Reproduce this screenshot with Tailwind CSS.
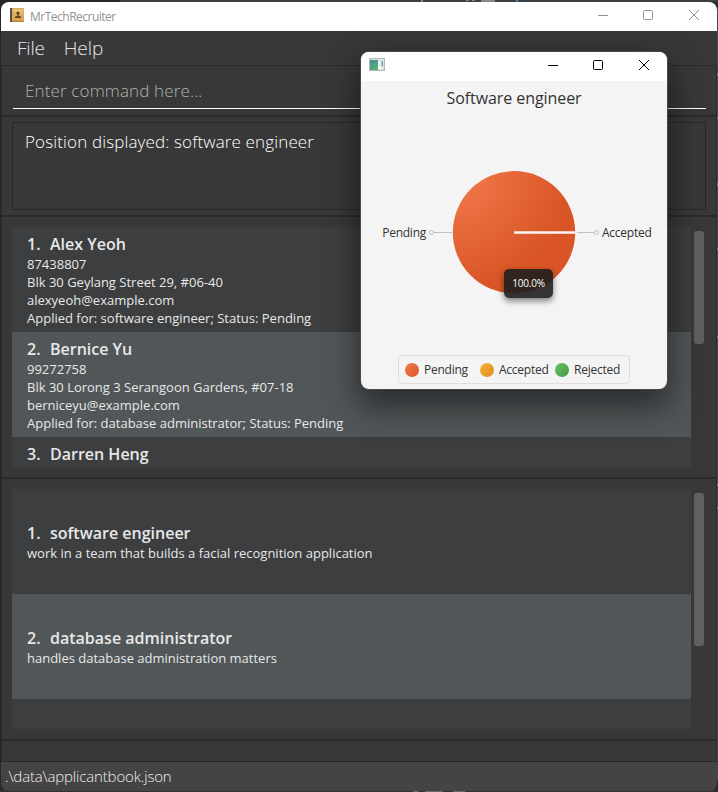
<!DOCTYPE html>
<html lang="en">
<head>
<meta charset="utf-8">
<title>MrTechRecruiter</title>
<script src="https://cdn.jsdelivr.net/npm/@tailwindcss/browser@4"></script>
</head>
<body class="relative h-[792px] w-[718px] overflow-hidden bg-[#25272b] font-['Open_Sans',sans-serif]">
<!-- Desktop details visible beyond the window's edge -->
<svg class="absolute inset-0" width="718" height="792" viewBox="0 0 718 792">
  <path d="M120 0H718V2H120z" fill="#3c3e40"/><path d="M421 0h2v2h-2zM466 0h3v1h-3zM472 0h3v1h-3zM481 0h14v2h-14z" fill="#85878a"/><path d="M516 0h2v2h-2z" fill="#4d86b4"/>
  <path d="M717 8V780" stroke="#4a4a4a" stroke-width="2"/>
  <path d="M717.500 73v3M717.500 117v2M717.500 183v3M717.500 248v2M717.500 336v2M717.500 484v2M717.500 507v2" stroke="#8b7767" stroke-width="1"/>
  <path d="M0 791H718" stroke="#333" stroke-width="2"/><path d="M413 791.500h5M425 791.500h18M453 791.500h12" stroke="#6b6b6b"/>
</svg>

<div class="relative ml-px mt-[2px] flex h-[789px] w-[716px] flex-col overflow-hidden rounded-[8px] bg-[#383838]">
  <header class="flex h-[29px] shrink-0 items-center bg-white pl-[9px]">
    <svg class="-mt-[3px]" width="14" height="14" viewBox="0 0 14 14"><defs><linearGradient id="book" x1="0" y1="0" x2="0" y2="1"><stop stop-color="#ecc47c"/><stop offset="1" stop-color="#d79a42"/></linearGradient></defs><rect width="14" height="14" rx="1" fill="#d5a860"/><rect x="3" y="1" width="10" height="12" fill="url(#book)"/><rect width="2" height="14" fill="#5d5040"/><path d="M2 13h12v1H2z" fill="#b5803a"/><circle cx="8" cy="5" r="1.600" fill="#5a4325"/><path d="M7.300 6h1.400v2l2.300.5V10H5V8.500l2.300-.5z" fill="#5a4325"/></svg>
    <span class="ml-[6px] text-[12px] leading-4 tracking-[-0.5px] text-[#929292]">MrTechRecruiter</span>
    <svg class="ml-auto mr-[16px] -mt-[3px]" width="103" height="12" viewBox="0 0 103 12" fill="none" stroke="#929292"><path d="M0 6.500H10"/><rect x="45.500" y="1.500" width="9" height="9" rx="1"/><path d="M91 1l10 10M101 1L91 11"/></svg>
  </header>

  <nav class="flex h-[34px] shrink-0 items-center gap-[19px] pl-[16px] text-[19px] font-light leading-6 text-[#e5e5e5]">
    <span class="tracking-[-0.2px]">File</span><span class="tracking-[-0.1px]">Help</span>
  </nav>

  <main class="flex h-[697px] shrink-0 flex-col border border-[#2a2a2a]">
    <section class="h-[49px] shrink-0 px-[10px] pt-[10px]">
      <div class="ml-px h-[33px] border-b border-white pl-[12px] pt-[3px] text-[17px] font-light leading-6 tracking-[0.14px] text-[#b2b2b2]">Enter command here...</div>
    </section>
    <section class="h-[102px] shrink-0 border-y-2 border-[#2a2a2a] px-[10px] pt-[5px]">
      <div class="h-[88px] border border-[#282828] pl-[12px] pt-[7px] text-[17px] font-light leading-6 tracking-[0.14px] text-white">Position displayed: software engineer</div>
    </section>

    <section class="flex h-[262px] shrink-0 border-b-2 border-[#2a2a2a] pl-[10px] pt-[10px]">
      <div class="h-[240px] w-[679px] overflow-hidden bg-[#3c3e3f] text-[13px] leading-[18px] text-[#e8e8e8]">
        <article class="h-[105px] pl-[15px] pt-[6px]">
          <h2 class="flex h-[22px] text-[16px] font-semibold leading-[22px]"><span class="w-[23px]">1.</span><span>Alex Yeoh</span></h2>
          <p>87438807</p><p>Blk 30 Geylang Street 29, #06-40</p><p>alexyeoh@example.com</p><p>Applied for: software engineer; Status: Pending</p>
        </article>
        <article class="h-[105px] bg-[#515658] pl-[15px] pt-[6px]">
          <h2 class="flex h-[22px] text-[16px] font-semibold leading-[22px]"><span class="w-[23px]">2.</span><span>Bernice Yu</span></h2>
          <p>99272758</p><p>Blk 30 Lorong 3 Serangoon Gardens, #07-18</p><p>berniceyu@example.com</p><p>Applied for: database administrator; Status: Pending</p>
        </article>
        <article class="h-[105px] pl-[15px] pt-[6px]">
          <h2 class="flex h-[22px] text-[16px] font-semibold leading-[22px]"><span class="w-[23px]">3.</span><span>Darren Heng</span></h2>
        </article>
      </div>
      <div class="ml-[3px] mt-[4px] h-[113px] w-[10px] rounded-[3px] bg-[#606060]"></div>
    </section>

    <section class="flex h-[262px] shrink-0 border-b-2 border-[#2a2a2a] pl-[10px] pt-[10px]">
      <div class="h-[240px] w-[679px] overflow-hidden bg-[#3c3e3f] text-[13px] leading-[18px] text-[#e8e8e8]">
        <article class="h-[105px] pl-[15px] pt-[33px]">
          <h2 class="flex h-[22px] text-[16px] font-semibold leading-[22px]"><span class="w-[23px]">1.</span><span>software engineer</span></h2>
          <p>work in a team that builds a facial recognition application</p>
        </article>
        <article class="h-[105px] bg-[#515658] pl-[15px] pt-[33px]">
          <h2 class="flex h-[22px] text-[16px] font-semibold leading-[22px]"><span class="w-[23px]">2.</span><span>database administrator</span></h2>
          <p>handles database administration matters</p>
        </article>
      </div>
      <div class="ml-[3px] mt-[4px] h-[153px] w-[10px] rounded-[3px] bg-[#606060]"></div>
    </section>
  </main>
  <footer class="flex-1 bg-[#444] pl-[4px] pt-[3px] text-[15px] font-light leading-[22px] tracking-[-0.16px] text-[#eee]">.\data\applicantbook.json</footer>
</div>

<!-- Statistics window -->
<div class="absolute left-[361px] top-[52px] flex h-[337px] w-[306px] flex-col overflow-visible rounded-[8px] bg-[#f4f4f4] text-[#333] shadow-[0_0_0_1px_#484848,0_14px_32px_3px_rgba(0,0,0,0.5)]">
  <header class="flex h-[29px] shrink-0 items-center rounded-t-[8px] bg-white pl-[8px]">
    <svg class="-mt-[4px]" width="16" height="13" viewBox="0 0 16 13"><defs><linearGradient id="app" x1="0" y1="0" x2=".6" y2="1"><stop stop-color="#4389a3"/><stop offset="1" stop-color="#58b36b"/></linearGradient></defs><rect x=".5" y=".5" width="15" height="12" fill="#dfe3e5" stroke="#b2b7bb"/><rect x="1" y="2" width="8" height="10" fill="url(#app)"/><path d="M9 3h3v4H9zM9 8h3v3H9z" fill="#f9f9f9"/><path d="M12.500 3H14v5h-1.500z" fill="#6fa4a8"/></svg>
    <svg class="ml-auto mr-[16px] -mt-[3px]" width="103" height="12" viewBox="0 0 103 12" fill="none" stroke="#000"><path d="M0 6.500H10"/><rect x="45.500" y="1.500" width="9" height="9" rx="1"/><path d="M91 1l10 10M101 1L91 11"/></svg>
  </header>
  <h1 class="mt-[6px] h-[22px] shrink-0 text-center text-[16px] leading-[22px] tracking-[-0.07px]">Software engineer</h1>
  <div class="relative flex h-[247px] shrink-0 items-center">
    <span class="w-[65px] text-right text-[12px] leading-4 tracking-[-0.25px]">Pending</span>
    <svg class="-mt-px" width="176" height="130" viewBox="426 167 176 130"><defs><radialGradient id="pie" gradientUnits="userSpaceOnUse" cx="453" cy="171" r="118"><stop stop-color="#f37c50"/><stop offset="1" stop-color="#d95525"/></radialGradient></defs><circle cx="514" cy="232.300" r="61.200" fill="url(#pie)"/><path d="M514 232.500H576" stroke="#f3d0c2" stroke-width="3"/><path d="M514 232.500H576" stroke="#f4f4f4"/><g fill="none" stroke="#c2c2c2"><path d="M433 232.500H452M577 232.500H595"/><circle cx="431.500" cy="232.500" r="2"/><circle cx="596.500" cy="232.500" r="2"/></g></svg>
    <span class="text-[12px] leading-4 tracking-[-0.25px]">Accepted</span>
    <div class="absolute left-[143px] top-[160px] h-[29px] w-[49px] rounded-[5px] bg-[#1e1e1e]/90 text-center text-[10px] leading-[29px] tracking-[-0.2px] text-white shadow-[0_3px_6px_rgba(0,0,0,0.5)]">100.0%</div>
  </div>
  <div class="ml-[37px] mt-[-1px] flex h-[29px] w-[232px] shrink-0 items-center rounded-[4px] border border-[#dedede] pl-[6px] text-[12px] leading-4 tracking-[-0.25px]">
    <div class="flex w-[75px] items-center gap-[5px]"><i class="size-[14px] shrink-0 rounded-full bg-linear-to-br from-[#f47a50] to-[#d75526]"></i><span>Pending</span></div>
    <div class="flex w-[75px] items-center gap-[5px]"><i class="size-[14px] shrink-0 rounded-full bg-linear-to-br from-[#f8b03b] to-[#dc8e17]"></i><span>Accepted</span></div>
    <div class="flex items-center gap-[5px]"><i class="size-[14px] shrink-0 rounded-full bg-linear-to-br from-[#67bf65] to-[#469b48]"></i><span>Rejected</span></div>
  </div>
</div>
</body>
</html>
